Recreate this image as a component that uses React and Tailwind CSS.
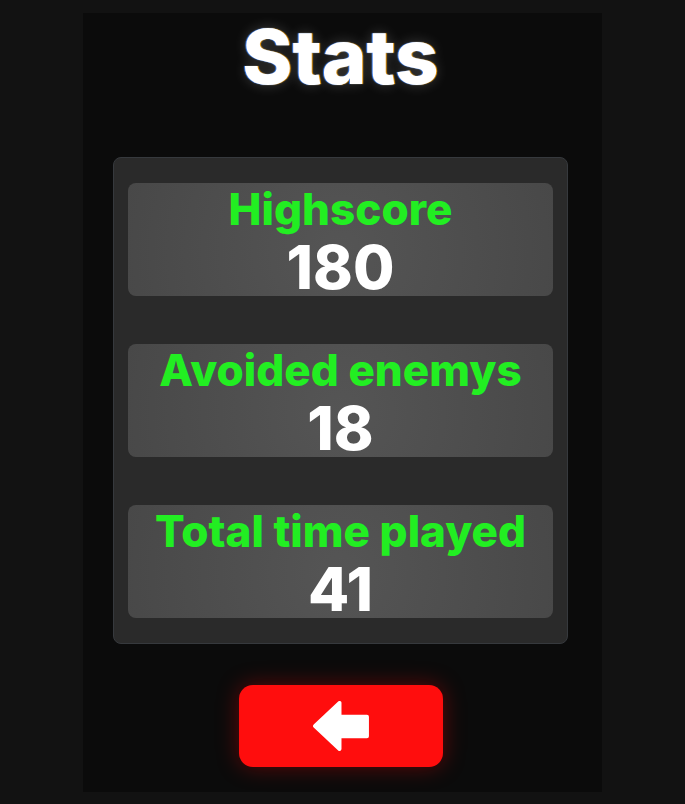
import React from "react"

const stats = [
    { label: "Highscore", value: "180" },
    { label: "Avoided enemys", value: "18" },
    { label: "Total time played", value: "41" },
]

function BackArrow() {
    return <svg width="56" height="50" viewBox="-2 -2 57 51">
        <polygon points="0,23.5 25,0 25,14 53,14 53,34 25,34 25,47"
            fill="#fff" stroke="#fff" strokeWidth="4" strokeLinejoin="round" />
    </svg>
}

export default function App() {
    return <div className="w-full h-[804px] bg-[#121212] px-[83px] pt-[13px] pb-3"
        style={{ fontFamily: "Inter, 'Noto Sans', sans-serif" }}>
        <div className="h-full bg-[#0b0b0b] flex flex-col items-center pr-1">
            {/* title */}
            <h1 className="mt-[5px] text-[76px] leading-none font-extrabold text-white
                [text-shadow:-1px_0_1px_#3b82f6,1px_0_1px_#f59e0b,0_0_14px_rgba(255,255,255,0.2)]">
                Stats
            </h1>
            {/* stats panel */}
            <div className="mt-[63px] w-[455px] bg-[#2a2a2a] border border-[#36393d] rounded-lg
                px-[14px] py-[25px] flex flex-col gap-[48px]">
                {stats.map(stat => (
                    <div key={stat.label}
                        className="h-[113px] rounded-lg bg-[radial-gradient(circle_at_50%_60%,#555555,#484848)] flex flex-col items-center pt-1">
                        <span className="text-[44px] leading-none font-extrabold text-[#22ee22]">
                            {stat.label}
                        </span>
                        <span className="mt-[6px] text-[60px] leading-none font-extrabold text-white">
                            {stat.value}
                        </span>
                    </div>
                ))}
            </div>
            {/* back button */}
            <button className="mt-[41px] w-[204px] h-[82px] rounded-[14px] bg-[#ff0d0d]
                shadow-[0_0_22px_rgba(255,0,0,0.35)] flex items-center justify-center">
                <BackArrow />
            </button>
        </div>
    </div>
}
